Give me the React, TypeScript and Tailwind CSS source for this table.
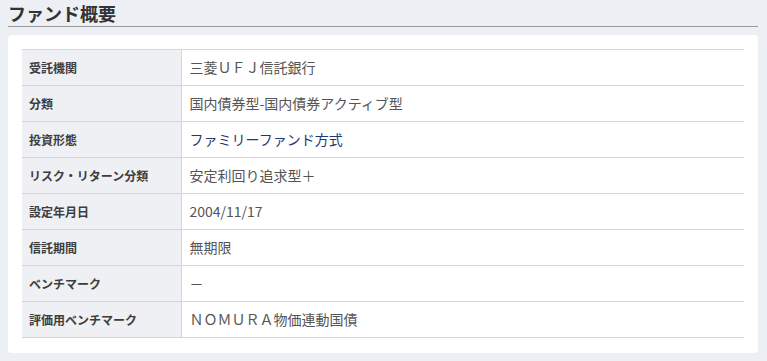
const rows: { label: string; value: string; link?: boolean }[] = [
  { label: "受託機関", value: "三菱ＵＦＪ信託銀行" },
  { label: "分類", value: "国内債券型-国内債券アクティブ型" },
  { label: "投資形態", value: "ファミリーファンド方式", link: true },
  { label: "リスク・リターン分類", value: "安定利回り追求型＋" },
  { label: "設定年月日", value: "2004/11/17" },
  { label: "信託期間", value: "無期限" },
  { label: "ベンチマーク", value: "－" },
  { label: "評価用ベンチマーク", value: "ＮＯＭＵＲＡ物価連動国債" },
];

export default function App() {
  return (
    <div
      className="min-h-[361px] w-[767px] bg-[#eceff3] px-2 pt-[3px]"
      style={{ fontFamily: '"Noto Sans CJK JP", "Noto Sans", sans-serif' }}
    >
      <h2 className="mr-[1px] border-b border-[#9a9a9a] pb-[2px] text-[18px] font-bold leading-[21px] text-[#333]">
        ファンド概要
      </h2>
      <div className="mr-[1px] mt-2 rounded-sm bg-white px-[14px] pb-[15px] pt-[14px]">
        <table className="w-full border-collapse">
          <tbody>
            {rows.map((r) => (
              <tr key={r.label} className="h-[36px] border-y border-[#d3d6db]">
                <th className="w-[159px] border-r border-[#d3d6db] bg-[#eef0f4] pl-[7px] text-left align-middle text-[12px] font-bold text-[#3d3d3d]">
                  {r.label}
                </th>
                <td
                  className={
                    r.link
                      ? "pl-[8px] align-middle text-[14px] text-[#1f3a73]"
                      : "pl-[8px] align-middle text-[14px] text-[#555]"
                  }
                >
                  {r.value}
                </td>
              </tr>
            ))}
          </tbody>
        </table>
      </div>
    </div>
  );
}
